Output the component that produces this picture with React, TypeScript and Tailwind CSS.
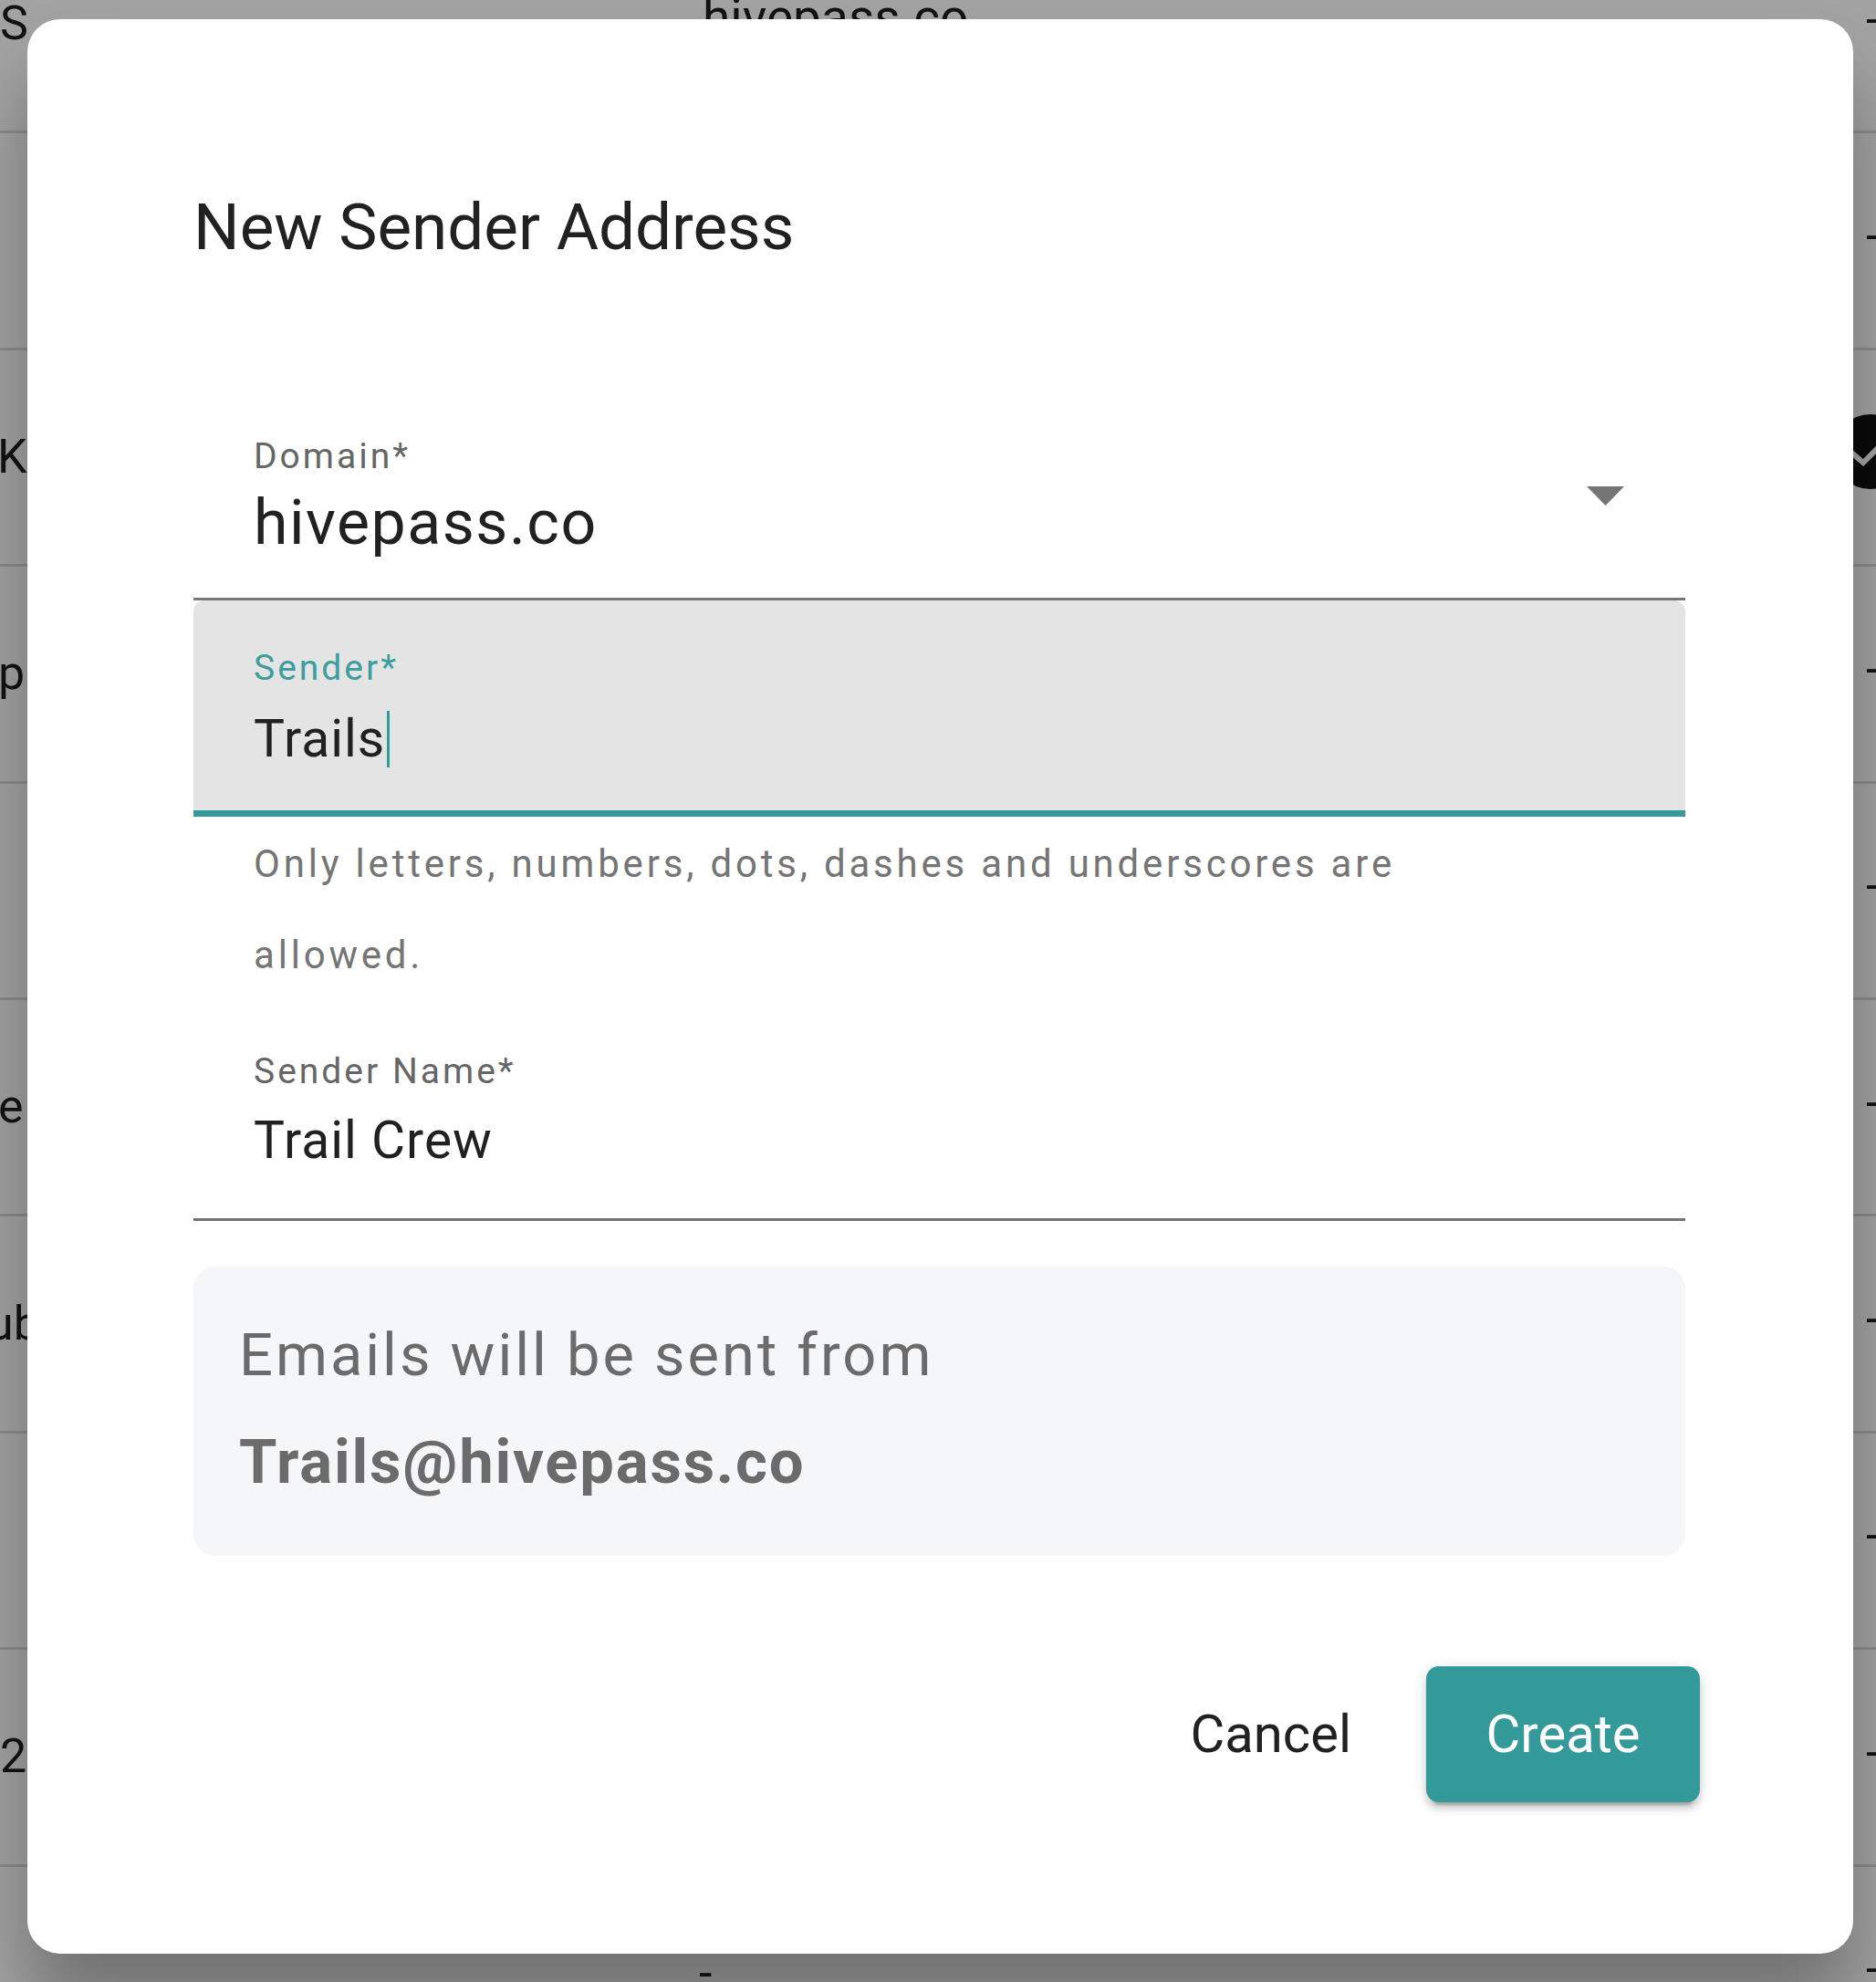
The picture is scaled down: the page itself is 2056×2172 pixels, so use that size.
type Row = {
  left?: string;
  leftCls?: string;
  mid?: string;
  midCls?: string;
  right: "dash" | "check";
};

// rows of the list page that sits behind the modal
const rows: Row[] = [
  { left: "S", leftCls: "ml-0", mid: "hivepass.co", midCls: "text-[55px] mb-[14px] ml-0", right: "dash" },
  { right: "dash" },
  { left: "Kestrel Ridge", leftCls: "-ml-[3px]", right: "check" },
  { left: "pathfinder", leftCls: "-ml-[2px]", right: "dash" },
  { right: "dash" },
  { left: "e notes", leftCls: "-ml-[2px]", right: "dash" },
  { left: "Hubway", leftCls: "-ml-[51px]", right: "dash" },
  { right: "dash" },
  { left: "2024", leftCls: "ml-0", right: "dash" },
  { mid: "-", midCls: "-ml-[4px]", right: "dash" },
];

const CheckDot: React.FC = () => (
  <svg className="-ml-[36px] mb-[12px] h-[82px] w-[82px] shrink-0" viewBox="0 0 82 82">
    <circle cx="41" cy="41" r="41" fill="#111" />
    <path d="M19 41l14 12 24-24" fill="none" stroke="#fff" strokeWidth="6" />
  </svg>
);

const Field: React.FC<{ label: string; value: string }> = ({ label, value }) => (
  <div className="border-b-[3px] border-[#737373] pb-[50px] pl-[66px] pt-[52px]">
    <div className="h-[50px] text-[39px] leading-[50px] tracking-[3px] text-[#666]">{label}</div>
    <div className="mt-[16px] h-[70px] text-[57px] leading-[70px] tracking-[1px] text-[#212121]">{value}</div>
  </div>
);

export default function App() {
  return (
    <div className="relative h-[2172px] w-full overflow-hidden bg-white font-[Roboto,sans-serif]">
      {/* page behind */}
      <div className="-mt-[91px] flex flex-col">
        {rows.map((r, i) => (
          <div
            key={i}
            className="flex h-[237.4px] shrink-0 items-center border-b-[3px] border-[#dcdcdc] text-[52px] text-[#1f1f1f]"
          >
            <div className="w-[770px] shrink-0 whitespace-nowrap">
              {r.left && <div className={r.leftCls}>{r.left}</div>}
            </div>
            <div className="w-[1275px] shrink-0 whitespace-nowrap">
              {r.mid && <div className={r.midCls}>{r.mid}</div>}
            </div>
            <div className="flex min-w-0 flex-1 items-center">
              {r.right === "check" ? <CheckDot /> : <div className="mb-[9px]">-</div>}
            </div>
          </div>
        ))}
      </div>

      <div className="absolute inset-0 bg-black/[0.36]" />

      {/* dialog */}
      <div className="absolute left-[30px] top-[21px] flex h-[2120px] w-[2001px] flex-col rounded-[36px] bg-white pl-[182px] pr-[184px] pt-[178px] shadow-[0_60px_80px_rgba(0,0,0,0.3)]">
        <h2 className="h-[100px] text-[71px] leading-[100px] text-[#212121]">New Sender Address</h2>

        <div className="flex border-b-[3px] border-[#777] pb-[42px] pl-[66px] pr-[67px] pt-[176px]">
          <div className="flex-1">
            <div className="h-[50px] text-[39px] leading-[50px] tracking-[3px] text-[#666]">Domain*</div>
            <div className="mt-[8px] h-[80px] text-[68px] leading-[80px] tracking-[1.5px] text-[#212121]">
              hivepass.co
            </div>
          </div>
          <svg className="mt-[58px] h-[21px] w-[41px]" viewBox="0 0 41 21">
            <path d="M0 0h41L20.5 21z" fill="#757575" />
          </svg>
        </div>

        <div className="rounded-t-[12px] border-b-[7px] border-[#339999] bg-[#e4e4e4] pb-[43px] pl-[66px] pt-[49px]">
          <div className="h-[50px] text-[39px] leading-[50px] tracking-[3px] text-[#3d9e9e]">Sender*</div>
          <div className="mt-[18px] flex h-[70px] items-center">
            <span className="text-[57px] leading-[70px] tracking-[1px] text-[#212121]">Trails</span>
            <span className="ml-[2px] h-[62px] w-[3px] bg-[#339999]" />
          </div>
        </div>

        <p className="mt-[2px] whitespace-nowrap pl-[66px] text-[42px] leading-[100px] tracking-[3.8px] text-[#757575]">
          Only letters, numbers, dots, dashes and underscores are
          <br />
          allowed.
        </p>

        <Field label="Sender Name*" value="Trail Crew" />

        <div className="mt-[50px] rounded-[24px] bg-[#f5f6f8] pb-[44px] pl-[50px] pt-[39px] text-[#6b6b6b]">
          <div className="h-[117px] text-[65px] leading-[117px] tracking-[3px]">Emails will be sent from</div>
          <div className="h-[117px] text-[67px] font-bold leading-[117px] tracking-[1.8px]">Trails@hivepass.co</div>
        </div>

        <div className="-mr-[16px] mt-[121px] flex justify-end gap-[46px]">
          <button className="h-[149px] px-[36px] text-[58px] text-[#212121]">Cancel</button>
          <button className="h-[149px] w-[300px] rounded-[14px] bg-[#339999] text-[58px] text-white shadow-[0_10px_3px_-7px_rgba(0,0,0,0.2),0_7px_7px_0_rgba(0,0,0,0.14),0_3px_17px_0_rgba(0,0,0,0.12)]">
            Create
          </button>
        </div>
      </div>
    </div>
  );
}
